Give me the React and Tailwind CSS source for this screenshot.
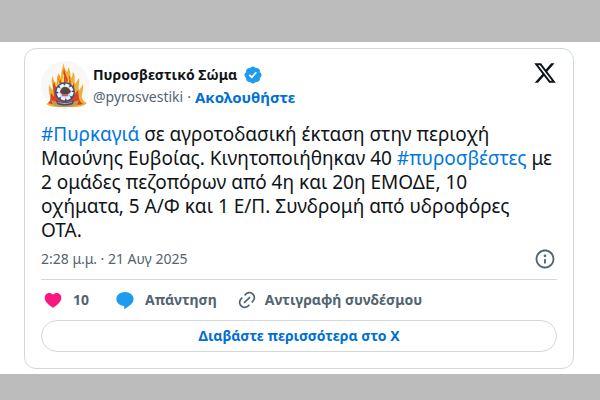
import React, { useState } from "react";

const icons = {
  x: "M18.244 2.25h3.308l-7.227 8.26 8.502 11.24H16.17l-5.214-6.817L4.99 21.75H1.68l7.73-8.835L1.254 2.25H8.08l4.713 6.231zm-1.161 17.52h1.833L7.084 4.126H5.117z",
  verified:
    "M20.396 11c-.018-.646-.215-1.275-.57-1.816-.354-.54-.852-.972-1.438-1.246.223-.607.27-1.264.14-1.897-.131-.634-.437-1.218-.882-1.687-.47-.445-1.053-.75-1.687-.882-.633-.13-1.29-.083-1.897.14-.273-.587-.704-1.086-1.245-1.44S11.647 1.62 11 1.604c-.646.017-1.273.213-1.813.568s-.969.854-1.24 1.44c-.608-.223-1.267-.272-1.902-.14-.635.13-1.22.436-1.69.882-.445.47-.749 1.055-.878 1.688-.13.633-.08 1.29.144 1.896-.587.274-1.087.705-1.443 1.245-.356.54-.555 1.17-.574 1.817.02.647.218 1.276.574 1.817.356.54.856.972 1.443 1.245-.224.606-.274 1.263-.144 1.896.13.634.433 1.218.877 1.688.47.443 1.054.747 1.687.878.633.132 1.29.084 1.897-.136.274.586.705 1.084 1.246 1.439.54.354 1.17.551 1.816.569.647-.016 1.276-.213 1.817-.567s.972-.854 1.245-1.44c.604.239 1.266.296 1.903.164.636-.132 1.22-.447 1.68-.907.46-.46.776-1.044.908-1.681s.075-1.299-.165-1.903c.586-.274 1.084-.705 1.439-1.246.354-.54.551-1.17.569-1.816zM9.662 14.85l-3.429-3.428 1.293-1.302 2.072 2.072 4.4-4.794 1.347 1.246z",
  info: "M13.5 8.5c0 .83-.67 1.5-1.5 1.5s-1.5-.67-1.5-1.5S11.17 7 12 7s1.5.67 1.5 1.5zM13 17v-5h-2v5h2zm-1 5.25c5.66 0 10.25-4.59 10.25-10.25S17.66 1.75 12 1.75 1.75 6.34 1.75 12 6.34 22.25 12 22.25zM20.25 12c0 4.56-3.69 8.25-8.25 8.25S3.75 16.56 3.75 12 7.44 3.75 12 3.75s8.25 3.69 8.25 8.25z",
  heart:
    "M20.884 13.19c-1.351 2.48-4.001 5.12-8.379 7.67l-.503.3-.504-.3c-4.379-2.55-7.029-5.19-8.382-7.67-1.36-2.5-1.41-4.86-.514-6.67.887-1.79 2.647-2.91 4.601-3.01 1.651-.09 3.368.56 4.798 2.01 1.429-1.45 3.146-2.1 4.796-2.01 1.954.1 3.714 1.22 4.601 3.01.896 1.81.846 4.17-.514 6.67z",
  reply:
    "M12 2.5c-5.7 0-10.3 3.5-10.3 8.3 0 4.6 3.9 8.1 9.3 8.4v2.9c0 .5.5.8.9.5 1.9-1.3 5.300-3.400 7.400-5.600 2-2 3-4 3-6.200 0-4.800-4.600-8.300-10.300-8.300z",
  link: "M18.36 5.64c-1.95-1.96-5.11-1.96-7.07 0L9.88 7.05 8.46 5.64l1.42-1.42c2.73-2.73 7.16-2.73 9.9 0 2.73 2.74 2.73 7.17 0 9.9l-1.42 1.42-1.41-1.42 1.41-1.41c1.96-1.96 1.96-5.12 0-7.07zm-2.12 3.53l-7.07 7.07-1.41-1.41 7.07-7.07 1.41 1.41zm-12.02.71l1.42-1.42 1.41 1.42-1.41 1.41c-1.96 1.96-1.96 5.12 0 7.07 1.95 1.96 5.11 1.96 7.07 0l1.41-1.41 1.42 1.41-1.42 1.42c-2.73 2.73-7.16 2.73-9.9 0-2.73-2.74-2.73-7.17 0-9.9z",
};

const Icon = ({ name, className, viewBox = "0 0 24 24" }) => (
  <svg viewBox={viewBox} className={className} fill="currentColor" aria-hidden="true">
    <path d={icons[name]} />
  </svg>
);

// Fire service emblem: round badge in front of flames
const Avatar = () => (
  <svg viewBox="0 0 48 48" className="size-12 shrink-0" role="img" aria-label="Πυροσβεστικό Σώμα">
    <circle cx="24" cy="24" r="24" fill="#f8f8f8" />
    <path
      d="M5 43c3-1 5-3 4-8-1-4-2-7 0-12 0 3 1 5 3 6 0-5-3-9 0-14 0 4 2 6 4 8 0-5-1-7 2-11 0 3 1 5 2 6 0-7 1-11 3-16 0 5 1 6 3 9 1-2 1-3 1-5 3 4 2 7 3 11 2-2 1-4 2-6 3 4 1 8 2 12 2-2 2-4 4-6 1 5-1 8 0 12 2-2 3-4 4-6 1 6-2 10-1 14 1 2 2 4 5 5-3 3-8 4-12 4H16c-5 0-8-1-11-3z"
      fill="#edb03a"
    />
    <path
      d="M7 42c4-2 2-7 3-10 2 2 2 3 3 4 0-6-2-11 0-15 1 3 2 5 4 6-1-5 0-9 2-13 0 4 1 5 2 7 1-5 1-9 2-14 1 5 2 8 4 12 1-2 1-3 1-5 2 4 1 8 2 12l3-5c1 5-1 9 0 13l4-5c1 6 0 11 5 14-6 2-29 2-35-1z"
      fill="#d94425"
    />
    <path
      d="M15 26c-1-3-1-3 0-5l2 3c0-4 1-6 2-9l2 6c0-4 1-6 1-9 2 4 2 7 4 10l2-6c1 4 0 6 1 8l4-3c-1 3-2 5-1 8z"
      fill="#ffd83a"
    />
    <path d="M18 22l1-5 2 6zM23 21l0-8 2 8zM28 22l1-4 1 6z" fill="#e0441f" />
    <path d="M10 39c5 3 23 3 28 0l-2 5c-6 3-18 3-24 0z" fill="#c49a52" />
    <circle cx="24" cy="31" r="10" fill="#3c4a80" />
    <circle
      cx="24"
      cy="31"
      r="7"
      fill="#c5cde0"
      stroke="#f4f5fb"
      strokeWidth="3"
      strokeDasharray="4 1.5"
    />
    <path d="M19 31c1-3 2-5 5-5s5 2 6 5l-3 2h-6z" fill="#54463f" />
    <path d="M21 34h6" stroke="#ab4a3c" strokeWidth="1.5" />
    <path d="M15 39c5 3 13 3 18 0l-1 4c-5 2-11 2-16 0z" fill="#454d68" />
    <path d="M17 41c4 2 10 2 14 0" fill="none" stroke="#a9aeba" />
  </svg>
);

const App = () => {
  const [liked, setLiked] = useState(true);

  return (
    <div className="border-t-[42px] border-b-[26px] border-[#bcbcbc] bg-white pt-1.5 pr-[26px] pb-[5px] pl-6 font-['Noto_Sans','Open_Sans',sans-serif] text-[#0f1419]">
      <article className="rounded-xl border border-[#cfd9de] px-4 pt-3 pb-4">
        {/* Author */}
        <header className="flex items-start">
          <Avatar />
          <div className="ml-1 flex min-w-0 grow flex-col pt-1 text-sm leading-5">
            <div className="flex items-center gap-1.5">
              <a href="#profile" className="font-bold">
                Πυροσβεστικό Σώμα
              </a>
              <Icon name="verified" viewBox="0 0 22 22" className="size-5 text-[#1d9bf0]" />
            </div>
            <div className="flex gap-1 pt-0.5 text-[#536471]">
              <a href="#profile">@pyrosvestiki</a>
              <span>·</span>
              <a href="#follow" className="text-[15px] leading-5 font-bold text-[#006fd6]">
                Ακολουθήστε
              </a>
            </div>
          </div>
          <a href="#post" aria-label="X" className="shrink-0">
            <Icon name="x" className="size-6" />
          </a>
        </header>

        {/* Post text */}
        <p className="mt-[13px] text-[19px] leading-6">
          <a href="#tag" className="inline-block text-[#0077e0]">
            #Πυρκαγιά
          </a>{" "}
          σε αγροτοδασική έκταση στην περιοχή Μαούνης Ευβοίας. Κινητοποιήθηκαν 40{" "}
          <a href="#tag" className="inline-block text-[#0077e0]">
            #πυροσβέστες
          </a>{" "}
          με 2 ομάδες πεζοπόρων από 4η και 20η ΕΜΟΔΕ, 10
          <br />
          οχήματα, 5 Α/Φ και 1 Ε/Π. Συνδρομή από υδροφόρες
          <br />
          ΟΤΑ.
        </p>

        <div className="flex items-center justify-between border-b border-[#cfd9de] pt-1.5 pb-[9px] text-sm text-[#536471]">
          <a href="#post">
            <time dateTime="2025-08-21T14:28">2:28 μ.μ. · 21 Αυγ 2025</time>
          </a>
          <a href="#info" aria-label="Πληροφορίες" className="mr-px">
            <Icon name="info" className="size-[22px]" />
          </a>
        </div>

        {/* Actions */}
        <div className="flex items-center gap-5 py-2.5 text-sm leading-5 font-bold text-[#536471]">
          <button
            type="button"
            aria-pressed={liked}
            onClick={() => setLiked(!liked)}
            className="flex items-center gap-2 pr-1"
          >
            <Icon name="heart" className={liked ? "h-5 w-6 text-[#f91880]" : "h-5 w-6"} />
            10
          </button>
          <button type="button" className="flex items-center gap-2">
            <Icon name="reply" className="h-5 w-6 text-[#1d9bf0]" />
            Απάντηση
          </button>
          <button type="button" className="flex items-center gap-2">
            <Icon name="link" className="h-5 w-5" />
            Αντιγραφή συνδέσμου
          </button>
        </div>

        <a
          href="#more"
          className="flex h-8 items-center justify-center rounded-full border border-[#cfd9de] text-sm font-bold text-[#006fd6]"
        >
          Διαβάστε περισσότερα στο X
        </a>
      </article>
    </div>
  );
};

export default App;
